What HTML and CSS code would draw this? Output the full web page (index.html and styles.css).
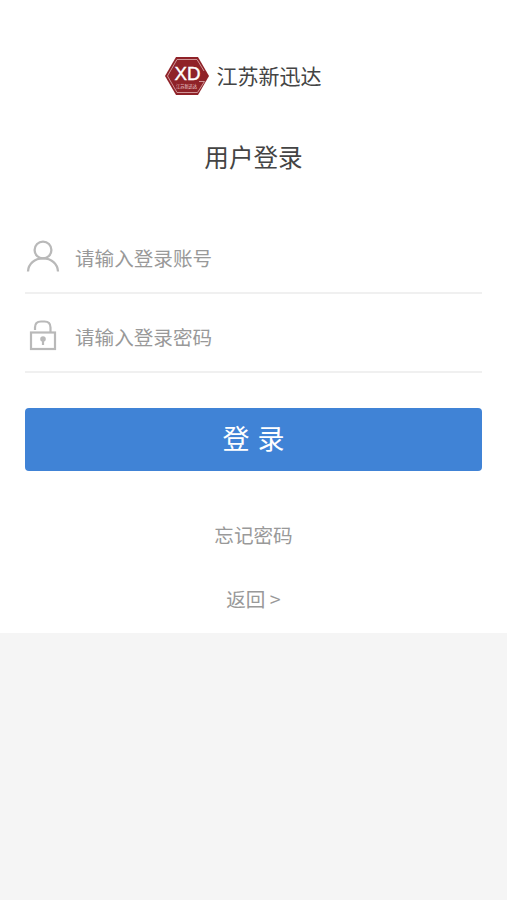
FILE: index.html
```html
<!DOCTYPE html>
<html lang="zh-CN">
<head>
    <meta charset="UTF-8">
    <meta name="viewport" content="width=device-width, initial-scale=1.0">
    <title>用户登录</title>
    <link rel="stylesheet" href="styles.css">
</head>
<body>
    <div class="login-container">
        <div class="brand">
            <svg class="brand-logo" viewBox="0 0 44 38">
                <path d="M11 0H33L44 19L33 38H11L0 19Z" fill="#8f2228"/>
                <path d="M34 24.500H39.500L32.500 35.500H12L2.500 19L12 2.500H32L39 14" fill="none" stroke="#cf9496" stroke-width="1"/>
                <text class="logo-mark" x="22.5" y="22.6" textLength="26" lengthAdjust="spacingAndGlyphs">XD</text>
                <text class="logo-name" x="21.5" y="30.8" textLength="21" lengthAdjust="spacingAndGlyphs">江苏新迅达</text>
            </svg>
            <span class="brand-name">江苏新迅达</span>
        </div>
        <h1 class="login-title">用户登录</h1>
        <form class="login-form" id="loginForm">
            <div class="form-group">
                <svg class="field-icon" viewBox="0 0 36 34" fill="none" stroke="#b9b9b9" stroke-width="2.3">
                    <circle cx="18" cy="10" r="8.400"/>
                    <path d="M3 31.500C3.300 24 9.500 18.400 18 18.400S32.700 24 33 31.500"/>
                </svg>
                <input type="text" id="account" placeholder="请输入登录账号">
            </div>
            <div class="form-group">
                <svg class="field-icon" viewBox="0 0 36 34" fill="none" stroke="#b9b9b9" stroke-width="2.2">
                    <rect x="6" y="13.500" width="24" height="16.500"/>
                    <path d="M10 11V8.500Q10 2.500 16 2.500H19.500Q25.500 2.500 25.500 8.500V13.500"/>
                    <circle cx="18" cy="20" r="1.700" fill="#b9b9b9"/>
                    <path d="M18 21V26"/>
                </svg>
                <input type="password" id="password" placeholder="请输入登录密码">
            </div>
            <button type="submit" class="btn">登 录</button>
        </form>
        <a class="link">忘记密码</a>
        <a class="link link-back">返回 &gt;</a>
    </div>
</body>
</html>
```
FILE: styles.css
```css
:root {
    --primary: #4083d6;
    --text-color: #444;
    --muted: #999;
    --line: #f0f0f0;
}

* {
    margin: 0;
    padding: 0;
    box-sizing: border-box;
}

body {
    font-family: 'Noto Sans CJK SC', sans-serif;
    background: #f5f5f5;
    min-height: 100vh;
    color: var(--text-color);
}

.login-container {
    height: 633px;
    padding: 57px 25px 0;
    background: #fff;
    display: flex;
    flex-direction: column;
    align-items: center;
}

.brand {
    display: flex;
    align-items: center;
    gap: 8px;
    height: 38px;
    margin-right: 21px;
}

.brand-logo {
    width: 44px;
    height: 38px;
}

.logo-mark {
    font-family: 'Liberation Sans', sans-serif;
    font-size: 18px;
    fill: #fff;
    stroke: #fff;
    stroke-width: 0.4px;
    text-anchor: middle;
}

.logo-name {
    font-size: 4.5px;
    fill: #f0d8d8;
    text-anchor: middle;
}

.brand-name {
    font-size: 21px;
    line-height: 38px;
    padding-bottom: 2px;
}

.login-title {
    margin-top: 43px;
    font-size: 24.6px;
    font-weight: 400;
    line-height: 36px;
}

.login-form {
    width: 457px;
    margin-top: 41px;
}

.form-group {
    display: flex;
    align-items: center;
    height: 79px;
    padding-top: 7px;
    border-bottom: 2px solid var(--line);
}

.field-icon {
    width: 36px;
    height: 34px;
    flex: none;
}

input {
    flex: 1;
    min-width: 0;
    height: 40px;
    margin-left: 14px;
    border: none;
    outline: none;
    font-family: inherit;
    font-size: 19.6px;
    color: var(--text-color);
    background: transparent;
}

input::placeholder {
    color: var(--muted);
}

.btn {
    display: block;
    width: 100%;
    height: 63px;
    margin-top: 35px;
    padding-bottom: 5px;
    border: none;
    border-radius: 4px;
    background: var(--primary);
    color: #fff;
    font-family: inherit;
    font-size: 27px;
    word-spacing: 2px;
    cursor: pointer;
}

.link {
    margin-top: 49px;
    font-size: 19.6px;
    line-height: 30px;
    color: var(--muted);
    text-decoration: none;
}

.link-back {
    margin-top: 34px;
}
```
